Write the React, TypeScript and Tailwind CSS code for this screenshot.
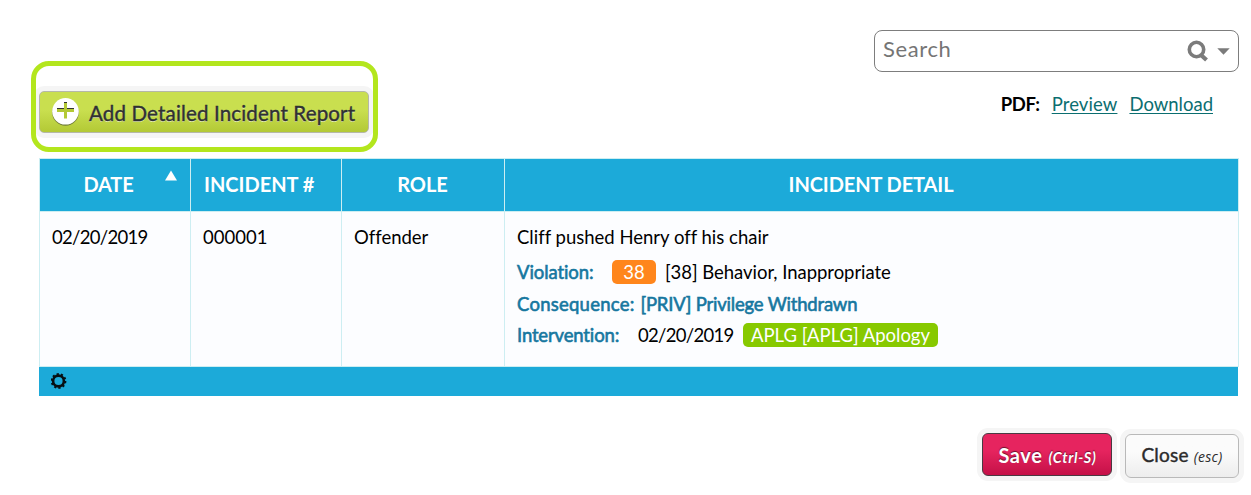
import type { ReactNode } from 'react';

export default function App() {
  return (
    <div className="w-[1251px] h-[495px] bg-white overflow-hidden font-['Lato',sans-serif] text-black [font-variant-ligatures:none]">
      {/* Toolbar */}
      <div className="flex h-[158px] items-start justify-between pl-[31px] pr-3">
        <div className="mt-[61px] h-[91px] w-[347px] overflow-hidden rounded-[18px] border-[5px] border-[#b3e61d] pl-[3px] pt-[25px]">
          <AddButton />
        </div>

        <div className="pt-[30px]">
          <SearchBox />
          <div className="mt-[18px] flex pr-[26px] justify-end text-[18.5px] leading-7">
            <span className="font-bold tracking-[-0.4px]">PDF:</span>
            <a href="#" className="ml-3 tracking-[0.1px] text-[#0b6e70] underline decoration-1 underline-offset-2">
              Preview
            </a>
            <a href="#" className="ml-3 text-[#0b6e70] underline decoration-1 underline-offset-2">
              Download
            </a>
          </div>
        </div>
      </div>

      {/* Incident table */}
      <div className="ml-[39px] w-[1200px]">
        <div className="grid grid-cols-[151px_151px_163px_734px] border-l border-y border-[#cdeef2] bg-[#1caad9] text-[20px] font-bold text-white">
          <HeaderCell>
            <span className="ml-[43.5px] tracking-[-0.2px]">DATE</span>
            <svg className="ml-auto mr-[13px] -mt-4.5 h-[11px] w-3" viewBox="0 0 12 11">
              <path d="M6 0.5L12 10.5H0Z" fill="#fff" />
            </svg>
          </HeaderCell>
          <HeaderCell>
            <span className="ml-[13px]">INCIDENT #</span>
          </HeaderCell>
          <HeaderCell>
            <span className="mx-auto pr-px">ROLE</span>
          </HeaderCell>
          <HeaderCell>
            <span className="mx-auto pr-px tracking-[-0.1px]">INCIDENT DETAIL</span>
          </HeaderCell>
        </div>

        <div className="grid h-[155px] grid-cols-[151px_151px_163px_734px] border-l border-b border-[#cdeef2] bg-[#fcfdff] text-[18.5px] leading-6">
          <Cell>
            <span className="tracking-[-0.7px]">02/20/2019</span>
          </Cell>
          <Cell>000001</Cell>
          <Cell>Offender</Cell>
          <Cell>
            <p>Cliff pushed Henry off his chair</p>
            <div className="mt-[11px] flex">
              <Label className="w-[95px] tracking-[-0.1px]">Violation:</Label>
              <span className="w-11 rounded-[5px] bg-[#ff861c] text-center text-white">38</span>
              <span className="ml-[9px] tracking-[-0.04px]">[38] Behavior, Inappropriate</span>
            </div>
            <div className="mt-2 flex">
              <Label className="w-[123.5px] tracking-[0.25px]">Consequence:</Label>
              <Label className="tracking-[-0.2px]">[PRIV] Privilege Withdrawn</Label>
            </div>
            <div className="mt-[7px] flex">
              <Label className="w-[121px] tracking-[-0.15px]">Intervention:</Label>
              <span className="w-[96px] tracking-[-0.7px]">02/20/2019</span>
              <span className="ml-[9px] w-[195px] rounded-[5px] bg-[#87c900] text-center text-white">
                APLG [APLG] Apology
              </span>
            </div>
          </Cell>
        </div>

        <div className="flex h-[29px] w-[1199px] items-center bg-[#1caad9] pb-px pl-3">
          <GearIcon />
        </div>
      </div>

      {/* Footer buttons */}
      <div className="mt-[37px] flex items-start justify-end gap-[13px] pr-3">
        <button
          type="button"
          className="flex h-[43px] w-[130px] items-baseline justify-center whitespace-nowrap rounded-[6px] border border-[#4a3a42] bg-linear-to-b from-[#e6245f] from-40% to-[#c51048] pt-[6px] pl-px text-[20px] font-bold tracking-[0.6px] text-white shadow-[0_0_0_5px_#f5f5f5] [text-shadow:0_-1px_1px_#0008]"
        >
          Save <span className="ml-[6px] text-[14.5px] italic tracking-[0.7px]">(Ctrl-S)</span>
        </button>
        <button
          type="button"
          className="mt-px flex h-11 w-[114px] items-baseline justify-center whitespace-nowrap rounded-[6px] border border-[#b9b9b9] bg-linear-to-b from-[#fbfbfb] from-40% to-[#ededed] pt-[6px] text-[19px] text-[#2b2b2b] shadow-[0_0_0_5px_#f5f5f5]"
        >
          <span className="tracking-[0.2px] [-webkit-text-stroke:0.4px]">Close</span>
          <span className="ml-[5px] font-['Open_Sans',sans-serif] text-[14px] italic tracking-[0.3px]">
            (esc)
          </span>
        </button>
      </div>
    </div>
  );
}

function AddButton() {
  return (
    <button
      type="button"
      className="flex h-[42px] w-[330px] items-center rounded-[5px] border border-[#b5b8a8] bg-linear-to-b from-[#c9df4f] from-45% to-[#b3c935] pl-3 shadow-[0_0_0_5px_#f5f5f5]"
    >
      <svg className="h-[28px] w-[28px] shrink-0" viewBox="0 0 28 28">
        <circle cx="13.5" cy="14.4" r="13.3" fill="#6f7b3a" />
        <circle cx="13.5" cy="13.3" r="13.3" fill="#fff" />
        <path d="M5 10.5H22M12 4.5H15" stroke="#333" strokeWidth="1" />
        <path d="M5 12.5H22M13.5 5V20.5" stroke="#b3c935" strokeWidth="3" />
      </svg>
      <span className="ml-[9px] mt-0.5 whitespace-nowrap text-[20.5px] tracking-[0.16px] text-[#2f3033] [-webkit-text-stroke:0.4px] [text-shadow:0_1px_0_#fff9]">
        Add Detailed Incident Report
      </span>
    </button>
  );
}

function SearchBox() {
  return (
    <div className="flex h-[42px] w-[365px] items-center rounded-[8px] border border-[#7d7d7d] pl-2 pr-2">
      <span className="-mt-1.5 text-[22px] tracking-[0.6px] text-[#757575]">Search</span>
      <svg className="ml-auto h-[22px] w-[22px]" viewBox="0 0 22 22" fill="none" stroke="#7b7b7b">
        <circle cx="9.5" cy="9.5" r="7.2" strokeWidth="3.6" />
        <path d="M14 15L19.5 20" strokeWidth="4.2" />
      </svg>
      <svg className="ml-2 h-[7px] w-[13px]" viewBox="0 0 13 7">
        <path d="M0.3 0.3H12.7L6.5 6.7Z" fill="#7b7b7b" />
      </svg>
    </div>
  );
}

function HeaderCell({ children }: { children: ReactNode }) {
  return (
    <div className="flex h-[52px] items-center whitespace-nowrap border-r border-[#cdeef2] pb-0.5">
      {children}
    </div>
  );
}

function Cell({ children }: { children: ReactNode }) {
  return (
    <div className="whitespace-nowrap border-r border-[#cdeef2] pl-3 pt-[13px]">{children}</div>
  );
}

function Label({ children, className = '' }: { children: ReactNode; className?: string }) {
  return (
    <span className={`text-[#16779f] [-webkit-text-stroke:0.6px] ${className}`}>{children}</span>
  );
}

function GearIcon() {
  return (
    <svg className="h-4 w-4" viewBox="0 0 16 16" fill="none" stroke="#071014">
      <circle cx="7.5" cy="8" r="5.4" strokeWidth="2.6" />
      <circle cx="7.5" cy="8" r="6.8" strokeWidth="2.2" strokeDasharray="2.14 2.14" />
    </svg>
  );
}
